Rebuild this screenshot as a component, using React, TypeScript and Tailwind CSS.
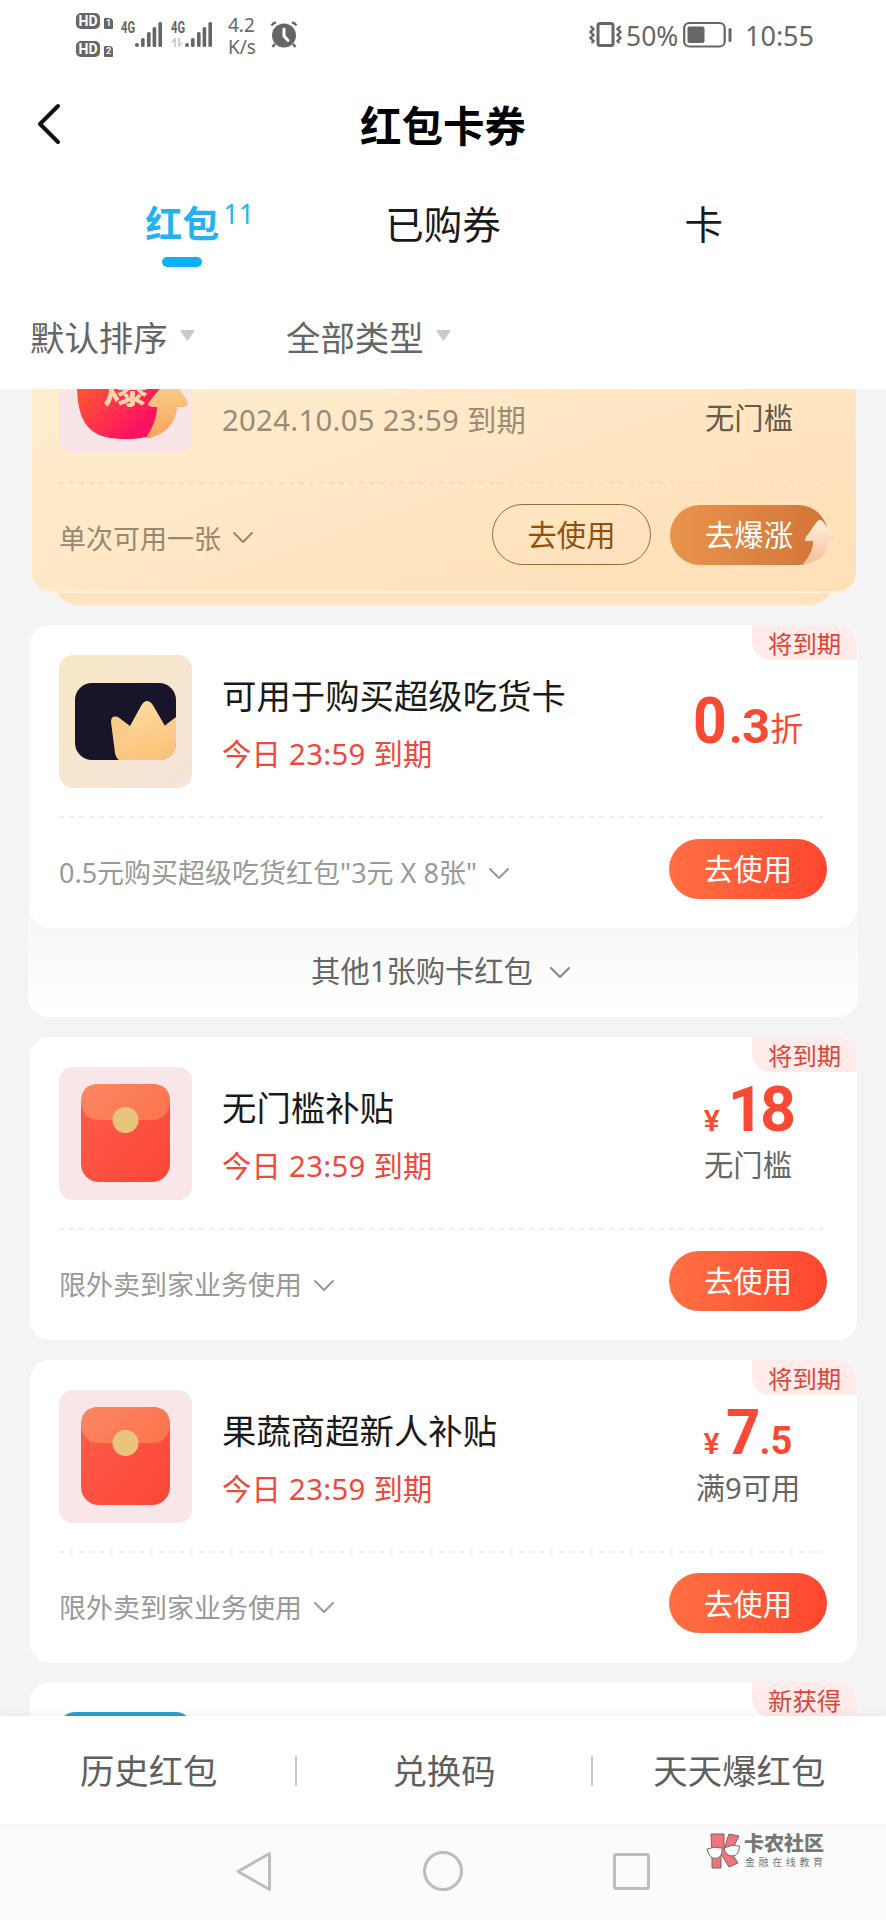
import type { ReactNode } from "react";
import clsx from "clsx";

type Coupon = {
  id: string;
  title?: string;
  tag: string;
  desc?: string;
  icon: ReactNode;
  price?: ReactNode;
  condition?: string;
};

function ChevronDown({ className }: { className?: string }) {
  return (
    <svg width="22" height="13" viewBox="0 0 22 13" fill="none" className={className}>
      <path d="M2 2l9 9 9-9" stroke="currentColor" strokeWidth="2" strokeLinejoin="round" strokeLinecap="round" />
    </svg>
  );
}

function Signal() {
  return (
    <svg width="28" height="26" viewBox="0 0 28 26" fill="#666">
      <rect x="0" y="21" width="4" height="4" rx="2" />
      <rect x="6" y="16" width="3.6" height="9" rx="1.5" />
      <rect x="12" y="10" width="3.6" height="15" rx="1.5" />
      <rect x="17.6" y="5" width="3.6" height="20" rx="1.5" />
      <rect x="23.4" y="0" width="3.6" height="25" rx="1.5" />
    </svg>
  );
}

function HdBadge({ sim }: { sim: string }) {
  return (
    <div className="flex items-end gap-1">
      <span className="flex h-4 w-6 items-center justify-center rounded-[5px] bg-[#666] font-[Roboto] text-[14px] font-bold leading-none text-white">
        HD
      </span>
      <span className="flex h-[11px] w-[9px] items-center justify-center rounded-[1px] rounded-tr-[4px] bg-[#666] font-[Roboto] text-[9px] font-bold leading-none text-white">
        {sim}
      </span>
    </div>
  );
}

function StatusBar() {
  return (
    <div className="flex h-[72px] shrink-0 items-start pl-[76px] text-[#666]">
      <div className="mt-[13px] flex flex-col gap-3">
        <HdBadge sim="1" />
        <HdBadge sim="2" />
      </div>
      <div className="ml-[8px] mt-[21px] flex">
        <div className="w-[14px]">
          <p className="w-[20px] origin-left scale-x-70 font-[Roboto] text-[16px] font-bold leading-[14px]">4G</p>
        </div>
        <div className="mt-[1px] w-[36px]">
          <Signal />
        </div>
        <div className="w-[14px]">
          <p className="w-[20px] origin-left scale-x-70 font-[Roboto] text-[16px] font-bold leading-[14px]">4G</p>
          <svg width="13" height="9" viewBox="0 0 13 9" className="mt-[3px]" fill="none" stroke="#ccc" strokeWidth="1.8">
            <path d="M1 4l3-3v8M8 0v8l3-3.5" />
          </svg>
        </div>
        <div className="mt-[1px]">
          <Signal />
        </div>
      </div>
      <div className="ml-[15px] mt-[14px] w-[42px] text-[19px] leading-[22px]">
        <p>4.2</p>
        <p>K/s</p>
      </div>
      <svg width="28" height="27" viewBox="0 0 28 27" className="mt-[21px]">
        <circle cx="14" cy="14.5" r="12" fill="#666" />
        <path d="M5 23l-2.5 3M23 23l2.5 3M1.5 4.5Q3 2 6 1.5M26.5 4.5Q25 2 22 1.5" stroke="#666" strokeWidth="2.4" fill="none" />
        <path d="M14 8v7l4 4.5" stroke="#fff" strokeWidth="3" fill="none" strokeLinecap="round" />
      </svg>
      <svg width="34" height="27" viewBox="0 0 34 27" className="ml-[291px] mt-[21px]" fill="none" stroke="#666">
        <rect x="9" y="2.5" width="15" height="22" rx="2" strokeWidth="3" />
        <path d="M1.500 5l3 3-3 3 3 3-3 3 3 3-2 2M31.500 5l-3 3 3 3-3 3 3 3-3 3 2 2" strokeWidth="2.4" />
      </svg>
      <span className="ml-[3px] mt-[17px] w-[57px] text-[26.5px] leading-[38px]">50%</span>
      <svg width="49" height="27" viewBox="0 0 49 27" className="mt-[21px]">
        <rect x="1.2" y="2" width="40.5" height="23.5" rx="5" fill="none" stroke="#666" strokeWidth="2.2" />
        <rect x="4.5" y="5.5" width="17" height="16.5" rx="2" fill="#666" />
        <rect x="45.5" y="7" width="3" height="14" rx="1.5" fill="#666" />
      </svg>
      <span className="ml-[13px] mt-[17px] text-[27px] leading-[38px]">10:55</span>
    </div>
  );
}

function BoostIcon() {
  return (
    <svg width="133" height="133" viewBox="0 0 133 133">
      <defs>
        <linearGradient id="boostRed" x1="0" y1="0" x2="1" y2="1">
          <stop offset="0.3" stopColor="#ff5236" />
          <stop offset="0.75" stopColor="#fb1260" />
        </linearGradient>
        <linearGradient id="boostArrow" x1="0" y1="0" x2="0" y2="1">
          <stop offset="0" stopColor="#f6d08e" />
          <stop offset="1" stopColor="#fba45c" />
        </linearGradient>
      </defs>
      <rect x="0" y="0" width="133" height="133" rx="14" fill="#f9e4e7" />
      <path d="M18 30C20 15 112 15 117 35V88C110 112 92 119 67 119 36 119 18 110 18 65z" fill="url(#boostRed)" />
      <text x="44" y="83" fontSize="45" fontWeight="700" fill="#ffd6ad" className="font-['Noto_Sans_CJK_SC',sans-serif]">
        爆
      </text>
      <path d="M110 61Q114 61 118 66L128 80Q130 86 125 87H118Q117 110 91 118H87Q98 101 98 87H93Q87 86 90 82L103 66Q107 61 110 61z" fill="url(#boostArrow)" />
    </svg>
  );
}

function CrownIcon() {
  return (
    <svg width="133" height="133" viewBox="0 0 133 133">
      <defs>
        <linearGradient id="crownBg" x1="0" y1="0" x2="1" y2="1">
          <stop offset="0" stopColor="#f8e8c8" />
          <stop offset="1" stopColor="#f5e4d8" />
        </linearGradient>
        <linearGradient id="crownGold" x1="0" y1="0" x2="0.3" y2="1">
          <stop offset="0" stopColor="#ffdfa6" />
          <stop offset="1" stopColor="#fac47a" />
        </linearGradient>
        <clipPath id="crownClip">
          <rect x="16" y="28" width="101" height="77" rx="17" />
        </clipPath>
      </defs>
      <rect width="133" height="133" rx="14" fill="url(#crownBg)" />
      <g clipPath="url(#crownClip)">
        <rect x="16" y="28" width="101" height="77" fill="#181429" />
        <path d="M52 67Q52 60 59 62L71 71 82 90 100 75 117 62V105H60Q57 103 56 98z" fill="#f8cb88" />
        <path d="M88 46Q92 46 95 52L106 71Q114 82 117 90V105H60Q60 93 68 80L71 71 82 51Q85 46 88 46z" fill="url(#crownGold)" />
      </g>
    </svg>
  );
}

function EnvelopeIcon() {
  return (
    <svg width="133" height="133" viewBox="0 0 133 133">
      <defs>
        <linearGradient id="envBody" x1="0" y1="0" x2="1" y2="1">
          <stop offset="0" stopColor="#ff5e4e" />
          <stop offset="1" stopColor="#fb4634" />
        </linearGradient>
        <linearGradient id="envFlap" x1="0" y1="0" x2="1" y2="0.4">
          <stop offset="0" stopColor="#fc8762" />
          <stop offset="1" stopColor="#fb7750" />
        </linearGradient>
      </defs>
      <rect width="133" height="133" rx="14" fill="#f9e6e8" />
      <rect x="22" y="17" width="89" height="98" rx="18" fill="url(#envBody)" />
      <path d="M22 35Q22 17 40 17H93Q111 17 111 35 109 53 92 53H41Q24 53 22 35z" fill="url(#envFlap)" />
      <circle cx="66.5" cy="53" r="13" fill="#e9c57c" />
    </svg>
  );
}

function Dashes({ className }: { className?: string }) {
  return (
    <div
      className={clsx(
        "h-[2px] bg-[repeating-linear-gradient(90deg,currentColor_0_5px,transparent_5px_10px)]",
        className
      )}
    />
  );
}

function CouponCard({ coupon }: { coupon: Coupon }) {
  return (
    <div className="relative h-[303px] shrink-0 overflow-hidden rounded-[20px] bg-white">
      <div className="flex h-[191px] pl-[29px] pr-[30px] pt-[30px]">
        <div className="size-[133px] shrink-0">{coupon.icon}</div>
        <div className="ml-[30px] flex-1 whitespace-nowrap pt-[19px]">
          {coupon.title && (
            <>
              <p className="text-[34.4px] leading-[44px] text-[#1a1a1a]">{coupon.title}</p>
              <p className="mt-[14px] text-[29.3px] leading-[44px] tracking-[0.3px] text-[#f0483a]">
                今日 23:59 到期
              </p>
            </>
          )}
        </div>
        <div className="flex w-[158px] shrink-0 flex-col items-center whitespace-nowrap text-[#fa4a35]">
          {coupon.price}
          {coupon.condition && (
            <p className="text-[29.3px] leading-[40px] text-[#666]">{coupon.condition}</p>
          )}
        </div>
      </div>
      <Dashes className="ml-[29px] mr-[34px] text-[#eee]" />
      {coupon.desc && (
        <div className="flex h-[110px] items-center justify-between pl-[29px] pr-[30px]">
          <div className="flex items-center gap-[11px] text-[#999]">
            <p className="whitespace-nowrap text-[27px] leading-[36px]">{coupon.desc}</p>
            <ChevronDown />
          </div>
          <button className="mb-[9px] h-[60px] w-[158px] rounded-full bg-linear-to-r from-[#ff7043] to-[#ff452f] pt-[3px] text-[29.3px] text-white">
            去使用
          </button>
        </div>
      )}
      <span className="absolute right-0 top-0 h-[35px] w-[105px] rounded-bl-[18px] bg-[#ffebe9] pl-4 text-[24.4px] leading-[37px] text-[#dc4539]">
        {coupon.tag}
      </span>
    </div>
  );
}

const discount = (
  <p className="mt-[35px] flex items-baseline font-[Roboto] text-[64px] font-bold leading-none">
    <span className="w-[36px] origin-left scale-x-92">0</span>
    <span className="text-[49px] leading-none tracking-[-1px]">.3</span>
    <span className="relative -top-[2px] ml-px font-['Noto_Sans_CJK_SC',sans-serif] text-[33px] font-normal leading-none">
      折
    </span>
  </p>
);

const eighteen = (
  <p className="mt-[11px] flex h-[67px] items-baseline font-[Roboto] text-[63px] font-bold leading-none">
    <span className="mr-[8px] text-[30px] font-semibold leading-none">¥</span>
    <span className="tracking-[-4px]">18</span>
  </p>
);

const sevenFive = (
  <p className="mt-[11px] flex h-[67px] items-baseline font-[Roboto] text-[63px] font-bold leading-none">
    <span className="mr-[6px] text-[30px] font-semibold leading-none">¥</span>
    <span className="w-[34px] origin-left scale-x-95">7</span>
    <span className="text-[38px] leading-none">.5</span>
  </p>
);

const COUPONS: Coupon[] = [
  {
    id: "subsidy",
    title: "无门槛补贴",
    tag: "将到期",
    desc: "限外卖到家业务使用",
    icon: <EnvelopeIcon />,
    price: eighteen,
    condition: "无门槛",
  },
  {
    id: "grocery",
    title: "果蔬商超新人补贴",
    tag: "将到期",
    desc: "限外卖到家业务使用",
    icon: <EnvelopeIcon />,
    price: sevenFive,
    condition: "满9可用",
  },
  {
    id: "new",
    tag: "新获得",
    icon: <div className="size-full rounded-[16px] bg-[#2aa1cf]" />,
  },
];

function BoostCard() {
  return (
    <div className="-mt-[99px] ml-[32px] mr-[30px] shrink-0">
      <div className="relative z-10 h-[303px] rounded-[20px] border-b-2 border-[#fff0d8] bg-linear-to-br from-[#fff0d2] via-[#ffe8c6] to-[#ffdfb8]">
        <div className="flex h-[192px] pl-[27px] pr-[28px] pt-[30px]">
          <BoostIcon />
          <p className="ml-[30px] mt-[78px] flex-1 text-[29.3px] leading-[44px] tracking-[0.3px] text-[#9b8b74]">
            2024.10.05 23:59 到期
          </p>
          <p className="mt-[77px] w-[158px] text-center text-[29.3px] leading-[42px] text-[#665a49]">无门槛</p>
        </div>
        <Dashes className="ml-[27px] mr-[32px] text-[#f3ddba]" />
        <div className="flex h-[107px] items-center pl-[27px] pr-[28px]">
          <p className="pt-[2px] text-[27px] leading-[36px] text-[#998870]">单次可用一张</p>
          <ChevronDown className="ml-[11px] text-[#998870]" />
          <button className="mb-[6px] ml-auto h-[61px] w-[159px] rounded-full border border-[#9a6a35] pt-[3px] text-[29.3px] text-[#944f08]">
            去使用
          </button>
          <div className="relative mb-[6px] ml-[19px]">
            <button className="h-[60px] w-[158px] rounded-full bg-linear-to-r from-[#e9944d] to-[#d27538] pt-[3px] text-[29.3px] text-white">
              去爆涨
            </button>
            <svg width="34" height="48" viewBox="0 0 34 48" className="absolute -right-[8px] bottom-0">
              <defs>
                <linearGradient id="upArrow" x1="0" y1="0" x2="0" y2="1">
                  <stop offset="0" stopColor="#fff0dc" />
                  <stop offset="1" stopColor="#f8bf97" />
                </linearGradient>
              </defs>
              <path d="M17 3Q19 2 22 6L32 20Q34 24 30 24H26Q27 41 4 47H1Q12 34 11 24H7Q1 25 4 20L14 6Q16 3 17 3z" fill="url(#upArrow)" />
            </svg>
          </div>
        </div>
      </div>
      <div className="mx-[22px] -mt-[20px] h-[32px] rounded-b-[24px] bg-[#ffe4bf]" />
    </div>
  );
}

function BrandMark() {
  return (
    <div className="absolute left-[706px] top-[9px] flex items-center">
      <svg width="35" height="36" viewBox="0 0 35 36" stroke="#776767" strokeWidth="1">
        <path d="M5 1h13v15l5-15 10 2-8 16 7 11-9 4-8-13v14H6V20z" fill="#f1737d" />
        <path d="M1 16Q8 13 16 15 17 25 9 25.500 3 25 1 16zM18 15Q25 11 33.500 13 33 23 26 23 20 23 18 15z" fill="#fff" />
      </svg>
      <div className="ml-[3px] whitespace-nowrap text-[#777]">
        <p className="text-[20px] font-black leading-[20px]">卡农社区</p>
        <p className="ml-px mt-[2px] text-[10px] leading-[12px] tracking-[3.6px]">金融在线教育</p>
      </div>
    </div>
  );
}

export default function App() {
  return (
    <div className="flex h-[1920px] w-[886px] flex-col overflow-hidden bg-white font-['Noto_Sans','Noto_Sans_CJK_SC',sans-serif]">
      <StatusBar />

      <header className="relative flex h-[108px] shrink-0 items-center justify-center">
        <svg width="24" height="42" viewBox="0 0 24 42" className="absolute left-[37px] top-[31px]" fill="none">
          <path d="M21 3L3 21l18 18" stroke="#111" strokeWidth="4" strokeLinecap="round" strokeLinejoin="round" />
        </svg>
        <h1 className="text-[41.5px] font-bold text-black">红包卡券</h1>
      </header>

      <nav className="grid h-[110px] shrink-0 grid-cols-3 px-[52px] pt-[19px] text-center text-[38.5px] leading-[50px] text-[#1a1a1a]">
        <div className="flex flex-col items-center">
          <p className="relative text-[37px] font-bold text-[#25b2f3]">
            红包
            <span className="absolute -top-[8px] left-[78px] text-[27px] font-normal leading-[45px]">11</span>
          </p>
          <span className="mt-[8px] h-[10px] w-10 rounded-full bg-[#0cb1fc]" />
        </div>
        <p>已购券</p>
        <p>卡</p>
      </nav>

      <div className="flex h-[99px] shrink-0 px-[30px] text-[34.4px] leading-[95px] text-[#666]">
        {["默认排序", "全部类型"].map((label) => (
          <div key={label} className="flex w-[256px] items-center">
            <span className="h-[99px]">{label}</span>
            <svg width="15" height="11" viewBox="0 0 15 11" className="mb-[8px] ml-[12px]">
              <path d="M1.5 0h12q1.5 0 .7 1.3L8.5 10q-1 1-2 0L.8 1.3Q0 0 1.5 0z" fill="#c9c9c9" />
            </svg>
          </div>
        ))}
      </div>

      <main className="flex h-[1327px] shrink-0 flex-col overflow-hidden bg-[#f4f4f4]">
        <BoostCard />

        {/* 购卡红包分组 */}
        <div className="mx-[28px] mt-[20px] h-[392px] shrink-0 rounded-[20px] bg-linear-to-b from-[#f7f7f7] from-[75%] to-white">
          <div className="ml-[2px] mr-[1px]">
            <CouponCard
              coupon={{
                id: "foodie",
                title: "可用于购买超级吃货卡",
                tag: "将到期",
                desc: '0.5元购买超级吃货红包"3元 X 8张"',
                icon: <CrownIcon />,
                price: discount,
              }}
            />
          </div>
          <div className="flex h-[87px] items-center justify-center gap-[16px] pr-[4px] text-[29.3px] text-[#666]">
            其他1张购卡红包
            <ChevronDown className="mt-[2px] text-[#888]" />
          </div>
        </div>

        <div className="ml-[30px] mr-[29px] mt-[20px] flex shrink-0 flex-col gap-[19.5px]">
          {COUPONS.map((coupon) => (
            <CouponCard key={coupon.id} coupon={coupon} />
          ))}
        </div>
      </main>

      <footer className="z-10 grid h-[108px] shrink-0 grid-cols-3 bg-white text-center text-[34.4px] leading-[110px] text-[#5f5f5f] shadow-[0_-2px_8px_rgba(0,0,0,0.05)]">
        {["历史红包", "兑换码", "天天爆红包"].map((label, i) => (
          <div key={label} className="flex items-center">
            <span className={clsx("h-[30px] w-[2px]", i > 0 && "bg-[#ccc]")} />
            <span className="flex-1">{label}</span>
          </div>
        ))}
      </footer>

      <div className="relative flex h-24 shrink-0 bg-[#fbfbfb] pt-[26px]">
        <svg width="38" height="44" viewBox="0 0 38 44" className="ml-[235px]" fill="none" stroke="#bdbdbd" strokeWidth="3">
          <path d="M34.5 3.5v36L3 21.5z" strokeLinejoin="round" />
        </svg>
        <svg width="42" height="42" viewBox="0 0 42 42" className="ml-[149px]" fill="none" stroke="#bdbdbd" strokeWidth="3">
          <circle cx="21" cy="21" r="18.5" />
        </svg>
        <svg width="38" height="42" viewBox="0 0 38 42" className="ml-[148px]" fill="none" stroke="#bdbdbd" strokeWidth="3">
          <rect x="2.5" y="4.5" width="34" height="34" rx="1.5" />
        </svg>
        <BrandMark />
      </div>
    </div>
  );
}
